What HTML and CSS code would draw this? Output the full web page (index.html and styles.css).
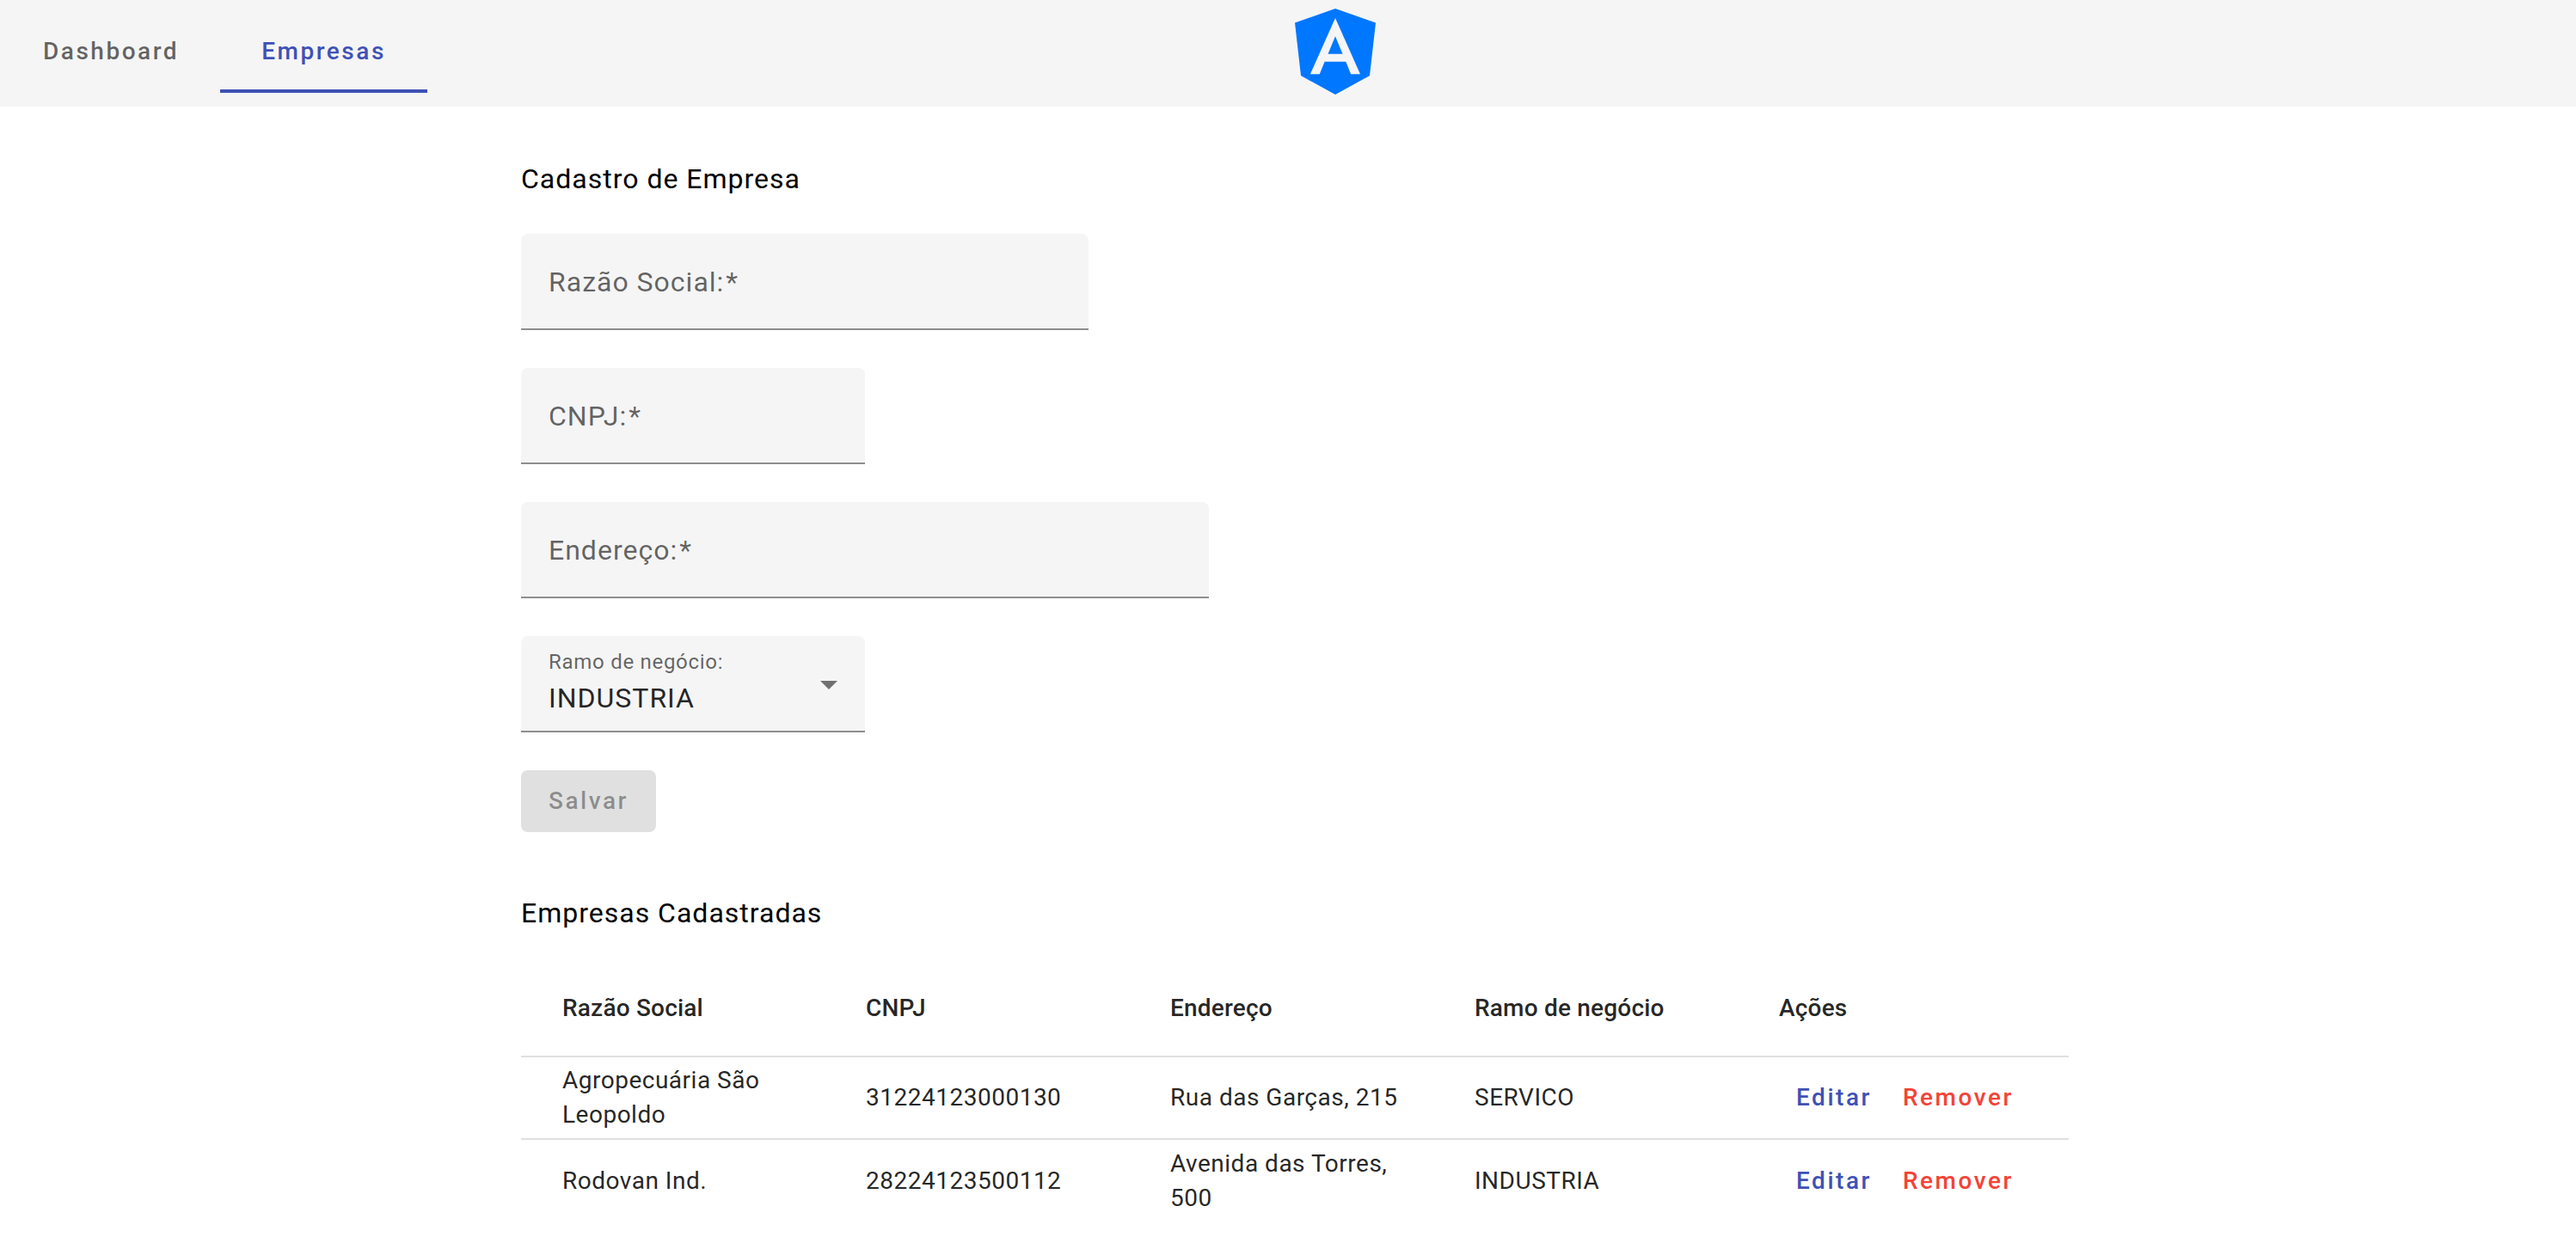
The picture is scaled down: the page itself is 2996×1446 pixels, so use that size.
FILE: index.html
```html
<!DOCTYPE html>
<html lang="pt-BR">
<head>
  <meta charset="utf-8">
  <meta name="viewport" content="width=device-width, initial-scale=1">
  <title>Empresas</title>
  <link rel="stylesheet" href="styles.css">
</head>
<body>
  <header class="topbar">
    <nav class="tabs">
      <a class="tab" href="#dashboard">Dashboard</a>
      <a class="tab tab-active" href="#empresas" aria-current="page">Empresas</a>
    </nav>
    <svg class="logo" viewBox="31 30 188 200" aria-hidden="true">
      <path fill="#07f" d="M125 30 31 63l14 123 80 44 80-44 14-123z"/>
      <path fill="#f5f5f5" d="M125 52.100 66.800 182.600h21.700l11.700-29.200h49.400l11.700 29.200H183L125 52.100zm17 83.300h-34l17-40.900 17 40.900z"/>
    </svg>
  </header>

  <main class="content">
    <h1 class="heading">Cadastro de Empresa</h1>
    <form class="form">
      <div class="field field-medium">
        <label class="label" for="razao">Razão Social:<span class="required">*</span></label>
        <input class="control" id="razao" type="text" required>
      </div>
      <div class="field field-small">
        <label class="label" for="cnpj">CNPJ:<span class="required">*</span></label>
        <input class="control" id="cnpj" type="text" required>
      </div>
      <div class="field field-large">
        <label class="label" for="endereco">Endereço:<span class="required">*</span></label>
        <input class="control" id="endereco" type="text" required>
      </div>
      <div class="field field-small">
        <label class="label label-raised" for="ramo">Ramo de negócio:</label>
        <select class="control control-select" id="ramo">
          <option selected>INDUSTRIA</option>
          <option>SERVICO</option>
        </select>
        <svg class="arrow" viewBox="0 0 20 10" aria-hidden="true"><path d="M0 0h20L10 10z"/></svg>
      </div>
      <button class="save" type="submit" disabled>Salvar</button>
    </form>

    <h2 class="heading heading-list">Empresas Cadastradas</h2>
    <table class="table">
      <colgroup>
        <col class="col-edge"><col><col><col><col class="col-edge">
      </colgroup>
      <thead>
        <tr><th>Razão Social</th><th>CNPJ</th><th>Endereço</th><th>Ramo de negócio</th><th>Ações</th></tr>
      </thead>
      <tbody>
        <tr>
          <td>Agropecuária São Leopoldo</td><td>31224123000130</td><td>Rua das Garças, 215</td><td>SERVICO</td>
          <td><div class="actions"><button class="action" type="button">Editar</button><button class="action action-warn" type="button">Remover</button></div></td>
        </tr>
        <tr>
          <td>Rodovan Ind.</td><td>28224123500112</td><td>Avenida das Torres, 500</td><td>INDUSTRIA</td>
          <td><div class="actions"><button class="action" type="button">Editar</button><button class="action action-warn" type="button">Remover</button></div></td>
        </tr>
      </tbody>
    </table>
  </main>
</body>
</html>
```
FILE: styles.css
```css
* {
  box-sizing: border-box;
}

body {
  margin: 0;
  background: #fff;
  color: #000;
  font-family: Roboto, "Liberation Sans", sans-serif;
  font-size: 32px;
  letter-spacing: 1px;
}

button,
input,
select {
  margin: 0;
  border: 0;
  font: inherit;
  letter-spacing: inherit;
}

.topbar {
  display: grid;
  grid-template-columns: 1fr 1fr;
  align-items: center;
  background: #f5f5f5;
}

.tabs {
  display: flex;
  padding: 12px 0 16px;
}

.tab {
  display: flex;
  align-items: center;
  height: 96px;
  padding: 0 48px 2px;
  border-bottom: 4px solid transparent;
  border-top: 4px solid transparent;
  color: rgba(0, 0, 0, 0.6);
  font-size: 28px;
  font-weight: 500;
  letter-spacing: 0.09em;
  text-decoration: none;
}

.tabs {
  padding-left: 2px;
}

.tab-active {
  border-bottom-color: #3f51b5;
  color: #3f51b5;
}

.logo {
  width: 94px;
  height: 100px;
  margin: 10px 8px 14px;
}

.content {
  box-sizing: content-box;
  max-width: 1800px;
  margin: 0 auto;
  padding: 52px 0 24px 16px;
}

.heading {
  margin: 0;
  font-size: 32px;
  font-weight: 400;
  line-height: 64px;
}

.heading-list {
  margin-top: 62px;
}

.form {
  display: flex;
  flex-direction: column;
  align-items: flex-start;
  gap: 44px;
  margin-top: 32px;
}

.field {
  display: grid;
  grid-template: 1fr / 1fr;
  align-items: center;
  width: 100%;
  height: 112px;
  border-bottom: 2px solid #8e8e8e;
  border-radius: 8px 8px 0 0;
  background: #f5f5f5;
}

.field > * {
  grid-area: 1 / 1;
}

.field-small {
  max-width: 400px;
}

.field-medium {
  max-width: 660px;
}

.field-large {
  max-width: 800px;
}

.label {
  padding: 2px 32px 0;
  color: rgba(0, 0, 0, 0.6);
  pointer-events: none;
}

.label-raised {
  align-self: start;
  padding-top: 16px;
  font-size: 24px;
  line-height: 28px;
  letter-spacing: 0.03em;
}

.required {
  margin-left: 2px;
}

.control {
  width: 100%;
  height: 100%;
  padding: 34px 32px 0;
  outline: 0;
  background: transparent;
  color: rgba(0, 0, 0, 0.87);
}

.control-select {
  appearance: none;
}

.arrow {
  justify-self: end;
  width: 20px;
  height: 10px;
  margin: 4px 32px 0 0;
  fill: rgba(0, 0, 0, 0.54);
  pointer-events: none;
}

.save {
  height: 72px;
  padding: 0 32px 2px;
  border-radius: 8px;
  background: #e0e0e0;
  color: rgba(0, 0, 0, 0.38);
  font-size: 28px;
  font-weight: 500;
  letter-spacing: 0.09em;
}

.table {
  width: 100%;
  margin-top: 24px;
  border-collapse: separate;
  border-spacing: 0;
  table-layout: fixed;
  color: rgba(0, 0, 0, 0.87);
  font-size: 28px;
  line-height: 40px;
  letter-spacing: 0.018em;
}

.col-edge {
  width: 20.5%;
}

.table th,
.table td {
  height: 96px;
  padding: 0 32px;
  border-bottom: 2px solid #e0e0e0;
  text-align: left;
  vertical-align: middle;
}

.table th {
  height: 112px;
  font-weight: 500;
  letter-spacing: 0.007em;
}

.table th:first-child,
.table td:first-child {
  padding-left: 48px;
}

.table th:last-child,
.table td:last-child {
  padding-right: 48px;
}

.table tbody tr:last-child td {
  border-bottom: 0;
}

.actions {
  display: flex;
  gap: 4px;
  padding-left: 4px;
}

.action {
  padding: 0 16px;
  background: transparent;
  color: #3f51b5;
  font-weight: 500;
  letter-spacing: 0.09em;
}

.action-warn {
  color: #f44336;
}
```
